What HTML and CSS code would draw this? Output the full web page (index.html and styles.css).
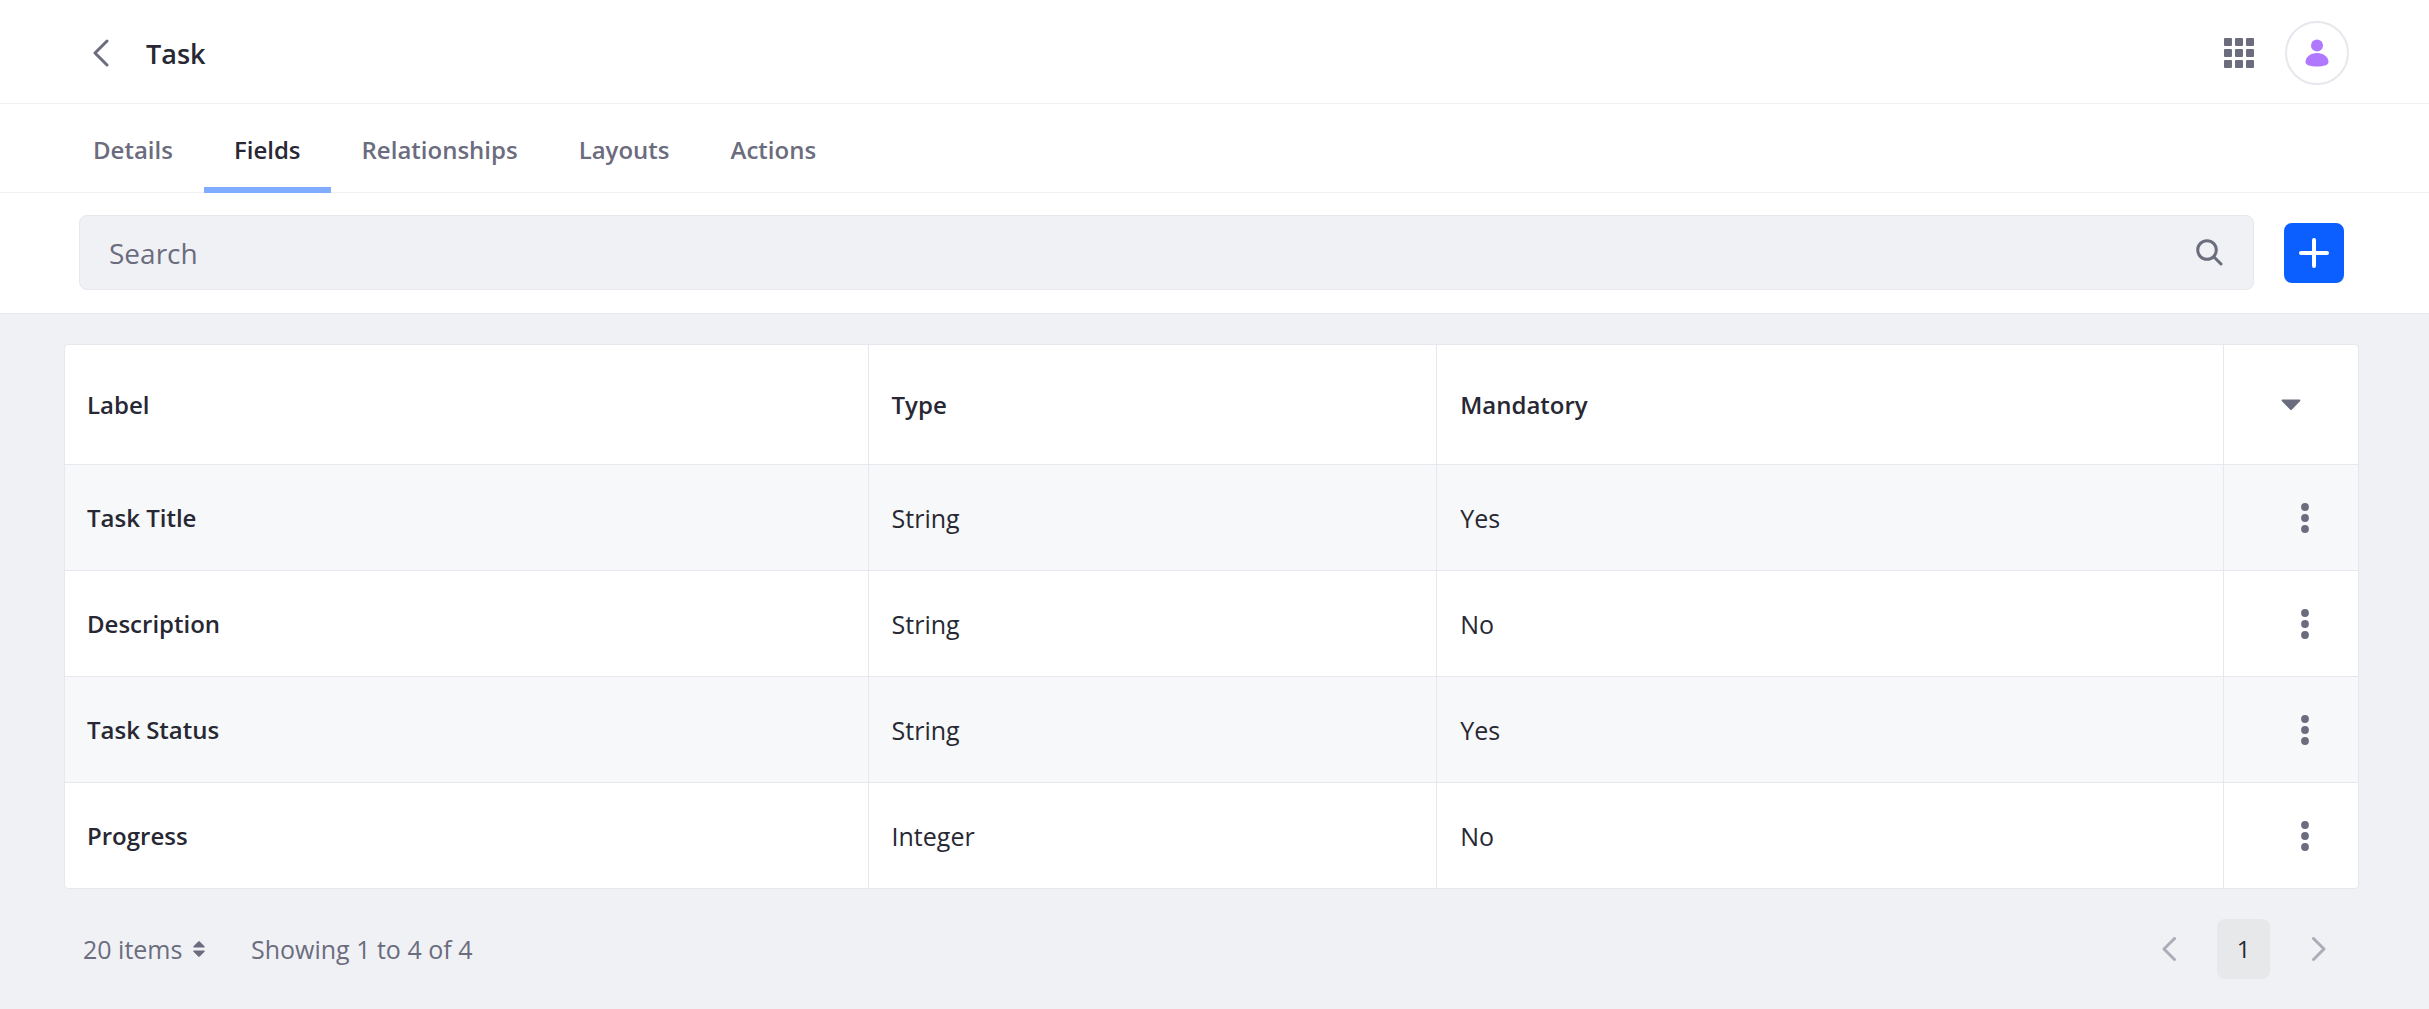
FILE: index.html
```html
<!DOCTYPE html>
<html lang="en">
<head>
<meta charset="utf-8">
<meta name="viewport" content="width=device-width, initial-scale=1">
<title>Task</title>
<link rel="stylesheet" href="styles.css">
</head>
<body>
<header class="topbar">
  <a class="back" href="#" aria-label="Back"><svg width="16" height="28" viewBox="0 0 16 28"><path d="M14 2 2 14l12 12"/></svg></a>
  <h1 class="title">Task</h1>
  <div class="tools">
    <button class="apps" type="button" aria-label="Applications">
      <svg width="30" height="30" viewBox="0 0 32 32"><path d="M1 0h6.500a1 1 0 0 1 1 1v6.500a1 1 0 0 1-1 1H1a1 1 0 0 1-1-1V1a1 1 0 0 1 1-1zM12.750 0h6.500a1 1 0 0 1 1 1v6.500a1 1 0 0 1-1 1h-6.500a1 1 0 0 1-1-1V1a1 1 0 0 1 1-1zM24.500 0H31a1 1 0 0 1 1 1v6.500a1 1 0 0 1-1 1h-6.500a1 1 0 0 1-1-1V1a1 1 0 0 1 1-1zM1 11.750h6.500a1 1 0 0 1 1 1v6.500a1 1 0 0 1-1 1H1a1 1 0 0 1-1-1v-6.500a1 1 0 0 1 1-1zM12.750 11.750h6.500a1 1 0 0 1 1 1v6.500a1 1 0 0 1-1 1h-6.500a1 1 0 0 1-1-1v-6.500a1 1 0 0 1 1-1zM24.500 11.750H31a1 1 0 0 1 1 1v6.500a1 1 0 0 1-1 1h-6.500a1 1 0 0 1-1-1v-6.500a1 1 0 0 1 1-1zM1 23.500h6.500a1 1 0 0 1 1 1V31a1 1 0 0 1-1 1H1a1 1 0 0 1-1-1v-6.500a1 1 0 0 1 1-1zM12.750 23.500h6.500a1 1 0 0 1 1 1V31a1 1 0 0 1-1 1h-6.500a1 1 0 0 1-1-1v-6.500a1 1 0 0 1 1-1zM24.500 23.500H31a1 1 0 0 1 1 1V31a1 1 0 0 1-1 1h-6.500a1 1 0 0 1-1-1v-6.500a1 1 0 0 1 1-1z"/></svg>
    </button>
    <button class="avatar" type="button" aria-label="User menu">
      <svg width="24" height="28" viewBox="0 0 24 28"><circle cx="12" cy="6.500" r="6"/><path d="M12 14C5.500 14 .5 18 .5 23c0 3 4.500 4.500 11.500 4.500S23.500 26 23.500 23c0-5-5-9-11.500-9z"/></svg>
    </button>
  </div>
</header>
<nav class="tabs" aria-label="Object">
  <a class="tab" href="#">Details</a>
  <a class="tab active" href="#" aria-current="page">Fields</a>
  <a class="tab" href="#">Relationships</a>
  <a class="tab" href="#">Layouts</a>
  <a class="tab" href="#">Actions</a>
</nav>
<form class="management" role="search">
  <div class="search">
    <input class="search-input" type="search" placeholder="Search" aria-label="Search">
    <button class="search-button" type="submit" aria-label="Search"><svg width="27" height="27" viewBox="0 0 27 27"><circle cx="11" cy="11" r="9.300"/><path d="m18 18 7 7"/></svg></button>
  </div>
  <button class="add" type="button" aria-label="Add"><svg width="30" height="30" viewBox="0 0 30 30"><path d="M15 2v26M2 15h26"/></svg></button>
</form>
<main class="content">
  <div class="card">
    <table class="fields">
      <colgroup><col class="col-label"><col class="col-type"><col class="col-mandatory"><col class="col-menu"></colgroup>
      <thead>
        <tr><th scope="col">Label</th><th scope="col">Type</th><th scope="col">Mandatory</th><th class="columns"><button class="icon-button" type="button" aria-label="Columns"><svg width="20" height="12" viewBox="0 0 20 12"><path d="M1.500.5h17c1 0 1.200 1 .5 1.700L11 10.500c-.6.7-1.400.7-2 0L1 2.200C.3 1.500.5.500 1.500.5z"/></svg></button></th></tr>
      </thead>
      <tbody>
        <tr><th scope="row">Task Title</th><td>String</td><td>Yes</td><td class="menu"><button class="icon-button" type="button" aria-label="Actions"><svg width="8" height="30" viewBox="0 0 8 30"><circle cx="4" cy="4" r="3.900"/><circle cx="4" cy="15" r="3.900"/><circle cx="4" cy="26" r="3.900"/></svg></button></td></tr>
        <tr><th scope="row">Description</th><td>String</td><td>No</td><td class="menu"><button class="icon-button" type="button" aria-label="Actions"><svg width="8" height="30" viewBox="0 0 8 30"><circle cx="4" cy="4" r="3.900"/><circle cx="4" cy="15" r="3.900"/><circle cx="4" cy="26" r="3.900"/></svg></button></td></tr>
        <tr><th scope="row">Task Status</th><td>String</td><td>Yes</td><td class="menu"><button class="icon-button" type="button" aria-label="Actions"><svg width="8" height="30" viewBox="0 0 8 30"><circle cx="4" cy="4" r="3.900"/><circle cx="4" cy="15" r="3.900"/><circle cx="4" cy="26" r="3.900"/></svg></button></td></tr>
        <tr><th scope="row">Progress</th><td>Integer</td><td>No</td><td class="menu"><button class="icon-button" type="button" aria-label="Actions"><svg width="8" height="30" viewBox="0 0 8 30"><circle cx="4" cy="4" r="3.900"/><circle cx="4" cy="15" r="3.900"/><circle cx="4" cy="26" r="3.900"/></svg></button></td></tr>
      </tbody>
    </table>
  </div>
  <div class="pagination">
    <label class="page-size">
      <select class="page-size-select" aria-label="Items per page"><option>20 items</option></select>
      <svg width="12" height="16" viewBox="0 0 12 16"><path d="M1 6.500h10c.8 0 1-.7.500-1.200L6.700.5c-.4-.4-1-.4-1.400 0L.5 5.300C0 5.800.2 6.500 1 6.500zM1 9.500h10c.8 0 1 .7.500 1.200l-4.800 4.800c-.4.4-1 .4-1.400 0L.5 10.700C0 10.200.2 9.500 1 9.500z"/></svg>
    </label>
    <p class="results">Showing 1 to 4 of 4</p>
    <nav class="pages" aria-label="Pages">
      <button class="page step" type="button" aria-label="Previous page" disabled><svg width="14" height="24" viewBox="0 0 14 24"><path d="M12.500 1.500 2 12l10.500 10.500"/></svg></button>
      <button class="page current" type="button" aria-current="page">1</button>
      <button class="page step" type="button" aria-label="Next page" disabled><svg width="14" height="24" viewBox="0 0 14 24"><path d="M1.500 1.500 12 12 1.500 22.500"/></svg></button>
    </nav>
  </div>
</main>
</body>
</html>
```
FILE: styles.css
```css
* { box-sizing: border-box; }

body {
  margin: 0;
  min-height: 100vh;
  background: #f0f1f5;
  color: #272833;
  font: 400 24px/36px "Open Sans", "Noto Sans", sans-serif;
}

button, input, select { font: inherit; color: inherit; }

button {
  display: flex;
  align-items: center;
  justify-content: center;
  padding: 0;
  border: 0;
  background: none;
  cursor: pointer;
}

svg { display: block; flex: none; fill: #6b6c7e; }

.topbar {
  display: flex;
  align-items: center;
  height: 104px;
  padding: 2px 80px 0 93px;
  background: #fff;
  border-bottom: 1px solid #f0f1f5;
}

.back svg, .step svg {
  fill: none;
  stroke: #6b6c7e;
  stroke-width: 3;
  stroke-linecap: round;
  stroke-linejoin: round;
}

.title { margin: 0 0 0 37px; padding-top: 2px; font-size: 27px; font-weight: 600; }

.tools { display: flex; align-items: center; gap: 31px; margin-left: auto; }

.avatar {
  width: 64px;
  height: 64px;
  border: 2px solid #e7e7ed;
  border-radius: 50%;
}

.avatar svg { fill: #af78ff; }

.tabs {
  display: flex;
  gap: 1px;
  height: 89px;
  padding: 0 63px;
  background: #fff;
  border-bottom: 1px solid #f0f1f5;
}

.tab {
  display: flex;
  align-items: center;
  margin-bottom: -1px;
  padding: 8px 30px 0;
  border-bottom: 6px solid transparent;
  color: #6b6c7e;
  font-weight: 600;
  text-decoration: none;
}

.tab.active { color: #272833; border-color: #80acff; }

.management {
  display: flex;
  align-items: center;
  gap: 30px;
  padding: 22px 85px 23px 79px;
  background: #fff;
  border-bottom: 1px solid #e7e7ed;
}

.search {
  display: flex;
  flex: 1;
  height: 75px;
  background: #f0f1f5;
  border: 1px solid #e7e7ed;
  border-radius: 8px;
}

.search-input {
  flex: 1;
  min-width: 0;
  padding: 0 0 0 29px;
  border: 0;
  background: none;
  font-size: 28px;
  appearance: none;
}

.search-input::placeholder { color: #6b6c7e; opacity: 1; }

.search-button { padding: 0 30px; }

.search-button svg { fill: none; stroke: #6b6c7e; stroke-width: 3; stroke-linecap: round; }

.add { width: 60px; height: 60px; border-radius: 8px; background: #0b5fff; }

.add svg { stroke: #fff; stroke-width: 4; stroke-linecap: round; }

.content { padding: 30px 70px 20px 64px; }

.card {
  background: #fff;
  border: 1px solid #e7e7ed;
  border-radius: 4px;
  overflow: hidden;
}

.fields {
  width: 100%;
  table-layout: fixed;
  border-collapse: separate;
  border-spacing: 0;
  text-align: left;
}

.col-label { width: 35%; }
.col-type { width: 24.8%; }
.col-mandatory { width: 34.3%; }
.col-menu { width: 5.9%; }

.fields th, .fields td {
  height: 106px;
  padding: 0 23px;
  border-top: 1px solid #e7e7ed;
  border-left: 1px solid #e7e7ed;
}

.fields th { font-weight: 600; }
.fields td { font-size: 25px; }
.fields thead th { height: 119px; border-top: 0; }
.fields th:first-child { padding-left: 22px; border-left: 0; }
.fields tbody tr:nth-child(odd) { background: #f7f8f9; }

.columns .icon-button { margin: 0 auto; }

.menu .icon-button { width: 60px; height: 60px; margin-left: auto; }

.pagination {
  display: flex;
  align-items: center;
  margin-top: 30px;
  padding: 0 14px 0 19px;
  color: #6b6c7e;
  font-size: 25px;
}

.page-size { display: flex; align-items: center; gap: 10px; }

.page-size-select { padding: 0; border: 0; background: none; appearance: none; }

.results { margin: 0 0 0 46px; }

.pages { display: flex; gap: 22px; margin-left: auto; }

.page { width: 53px; height: 60px; border-radius: 8px; }

.current { background: #e7e8ea; color: #272833; font-size: 24px; }

.step svg { stroke: #acadb9; }
```
